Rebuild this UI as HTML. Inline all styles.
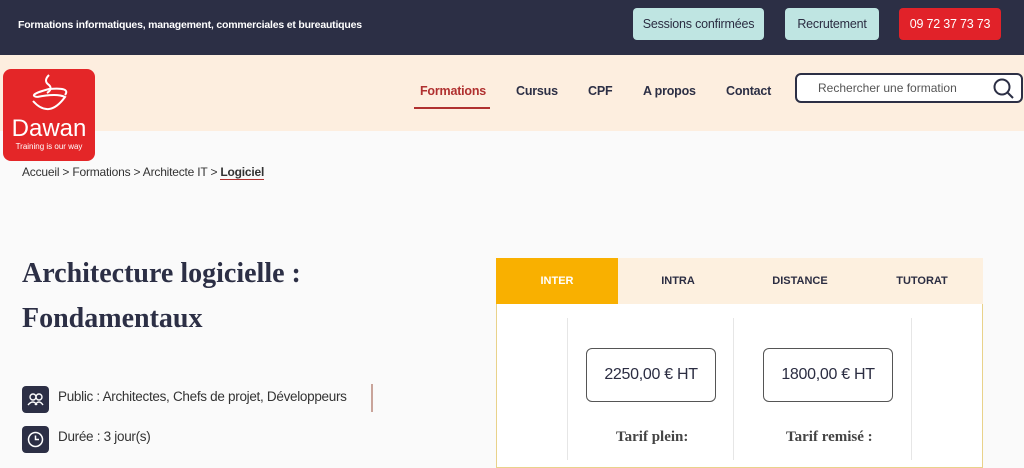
<!DOCTYPE html><html><head><meta charset="utf-8"><style>
*{box-sizing:border-box;margin:0;padding:0}
body{width:1024px;height:460px;overflow:hidden;background:#fafafa;font-family:"Liberation Sans",sans-serif;color:#2b2d42;position:relative}
.a{position:absolute}
.top{left:0;top:0;width:1024px;height:55px;background:#2c2f45}
.btn{top:8px;height:32px;border-radius:4px;font-size:12.5px;display:flex;align-items:center;justify-content:center;letter-spacing:-0.2px}
.band{left:0;top:55px;width:1024px;height:76px;background:#fdeedf}
.nav{font-size:12.5px;font-weight:bold;top:84px;color:#2c2f45;letter-spacing:-0.2px}
.tab{top:258px;height:46px;font-size:11px;font-weight:bold;display:flex;align-items:center;justify-content:center}
.price{width:130px;height:54px;border:1px solid #555;border-radius:6px;display:flex;align-items:center;justify-content:center;font-size:16px;top:348px;letter-spacing:-0.3px}
.tar{font-family:"Liberation Serif",serif;font-weight:bold;font-size:15px;top:429px;color:#444}
.ic{width:27px;height:27px;border-radius:4px;background:#2c2f45;left:22px}
</style></head><body>
<div class="a top"></div>
<div class="a" style="left:18px;top:19px;color:#fff;font-size:10.5px;font-weight:bold;letter-spacing:-0.2px">Formations informatiques, management, commerciales et bureautiques</div>
<div class="a btn" style="left:633px;width:131px;background:#bfe5e2">Sessions confirmées</div>
<div class="a btn" style="left:785px;width:94px;background:#bfe5e2">Recrutement</div>
<div class="a btn" style="left:899px;width:102px;background:#e12229;color:#fff">09 72 37 73 73</div>
<div class="a band"></div>
<div class="a" style="left:3px;top:69px;width:92px;height:92px;background:#e42628;border-radius:8px;color:#fff;text-align:center">
<svg width="60" height="48" viewBox="0 0 60 48" style="margin-top:2px"><path d="M14 30 Q30 48 46 26 Q38 22 18 26 M18 26 Q8 24 30 18 Q52 16 46 24" fill="none" stroke="#fff" stroke-width="2"/><path d="M30 4 Q24 10 30 14 Q34 18 28 22" fill="none" stroke="#fff" stroke-width="2"/></svg>
<div style="font-size:24px;line-height:22px;margin-top:-6px">Dawan</div>
<div style="font-size:8px;margin-top:2px">Training is our way</div></div>
<div class="a nav" style="left:420px;color:#b0302f">Formations</div>
<div class="a" style="left:414px;top:107px;width:76px;height:2px;background:#b0302f"></div>
<div class="a nav" style="left:516px">Cursus</div>
<div class="a nav" style="left:588px">CPF</div>
<div class="a nav" style="left:643px">A propos</div>
<div class="a nav" style="left:726px">Contact</div>
<div class="a" style="left:795px;top:73px;width:228px;height:30px;border:2px solid #2c2f45;border-radius:6px;background:#fff;font-size:12px;color:#555;padding:6px 0 0 21px">Rechercher une formation</div>
<svg class="a" style="left:992px;top:77px" width="24" height="24"><circle cx="10" cy="10" r="7.5" fill="none" stroke="#2c2f45" stroke-width="2"/><line x1="15.5" y1="15.5" x2="21" y2="21" stroke="#2c2f45" stroke-width="2"/></svg>
<div class="a" style="left:22px;top:165px;font-size:12px;color:#333;letter-spacing:-0.2px">Accueil &gt; Formations &gt; Architecte IT &gt; <b style="border-bottom:1px solid #b0302f">Logiciel</b></div>
<div class="a" style="left:22px;top:251px;font-family:'Liberation Serif',serif;font-weight:bold;font-size:28px;line-height:45px;color:#2c2f45">Architecture logicielle :<br>Fondamentaux</div>
<div class="a ic" style="top:386px"><svg width="27" height="27"><circle cx="11" cy="11" r="3" fill="none" stroke="#fff" stroke-width="1.4"/><circle cx="17" cy="11" r="3" fill="none" stroke="#fff" stroke-width="1.4"/><path d="M6 19 Q11 13 15 19 M13 19 Q17 13 21 19" fill="none" stroke="#fff" stroke-width="1.4"/></svg></div>
<div class="a" style="left:58px;top:389px;font-size:13.5px;color:#333;letter-spacing:-0.3px">Public : Architectes, Chefs de projet, Développeurs</div>
<div class="a" style="left:371px;top:384px;width:2px;height:28px;background:#c9a49a"></div>
<div class="a ic" style="top:426px"><svg width="27" height="27"><circle cx="13.5" cy="13.5" r="7" fill="none" stroke="#fff" stroke-width="1.5"/><path d="M13.5 9.5V13.5H17" fill="none" stroke="#fff" stroke-width="1.5"/></svg></div>
<div class="a" style="left:58px;top:429px;font-size:13.5px;color:#333;letter-spacing:-0.3px">Durée : 3 jour(s)</div>
<div class="a" style="left:496px;top:258px;width:487px;height:210px;border:1px solid #e9d28a;background:#fff"></div>
<div class="a" style="left:496px;top:258px;width:487px;height:46px;background:#fdf0df"></div>
<div class="a tab" style="left:496px;width:122px;background:#f9b000;color:#fff">INTER</div>
<div class="a tab" style="left:618px;width:120px">INTRA</div>
<div class="a tab" style="left:738px;width:124px">DISTANCE</div>
<div class="a tab" style="left:862px;width:120px">TUTORAT</div>
<div class="a" style="left:567px;top:318px;width:1px;height:142px;background:#e6e6e6"></div>
<div class="a" style="left:733px;top:318px;width:1px;height:142px;background:#e6e6e6"></div>
<div class="a" style="left:911px;top:318px;width:1px;height:142px;background:#e6e6e6"></div>
<div class="a price" style="left:586px">2250,00 € HT</div>
<div class="a price" style="left:763px">1800,00 € HT</div>
<div class="a tar" style="left:616px">Tarif plein:</div>
<div class="a tar" style="left:786px">Tarif remisé :</div>
</body></html>
